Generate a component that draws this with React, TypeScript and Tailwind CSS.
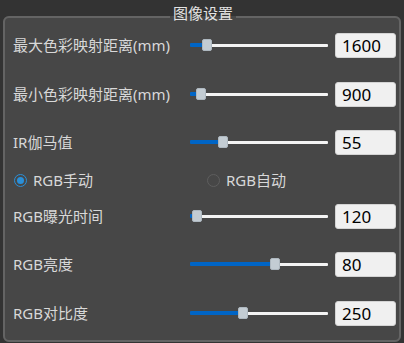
import React from "react";

type Row = { label: string; value: string; fill: number };

const TOP: Row[] = [
  { label: "最大色彩映射距离(mm)", value: "1600", fill: 12 },
  { label: "最小色彩映射距离(mm)", value: "900", fill: 6 },
  { label: "IR伽马值", value: "55", fill: 28 },
];

const BOTTOM: Row[] = [
  { label: "RGB曝光时间", value: "120", fill: 2 },
  { label: "RGB亮度", value: "80", fill: 80 },
  { label: "RGB对比度", value: "250", fill: 48 },
];

const font = { fontFamily: '"Noto Sans", "Noto Sans CJK SC", sans-serif' };

function Slider({ fill }: { fill: number }) {
  // track is 138px, handle 10px
  return (
    <div className="w-[138px] h-[12px] flex items-center shrink-0">
      <div className="h-[4px] bg-[#0065c6] rounded-l-[1px]" style={{ width: fill }} />
      <div className="w-[10px] h-[12px] rounded-[2px] bg-[#c3ccd3] border border-[#aeb8c0] shrink-0" />
      <div className="flex-1 h-[3px] bg-[#f4f4f4] rounded-r-[1px]" />
    </div>
  );
}

function SliderRow({ row, className }: { row: Row; className?: string }) {
  return (
    <div className={["flex items-center h-[24px] pl-[8px]", className || ""].join(" ")}>
      <div className="w-[177px] shrink-0 text-[15px] leading-[20px] text-[#d8d8d8] whitespace-nowrap">{row.label}</div>
      <Slider fill={row.fill} />
      <div className="ml-[7px] w-[61px] h-[25px] shrink-0 rounded-[3px] bg-[#f0f0f0] border border-[#d4d4d4] pl-[6px] flex items-center text-[17px] leading-none text-black">
        {row.value}
      </div>
    </div>
  );
}

function Radio({ checked, label }: { checked: boolean; label: string }) {
  return (
    <div className="flex items-center">
      <div className={["w-[13px] h-[13px] rounded-full border grid place-items-center shrink-0", checked ? "border-[#2a8fd8]" : "border-[#5e5e5e]"].join(" ")}>
        {checked && <div className="w-[7px] h-[7px] rounded-full bg-[#2a8fd8]" />}
      </div>
      <span className="ml-[6px] text-[15px] leading-[20px] text-[#d8d8d8] whitespace-nowrap">{label}</span>
    </div>
  );
}

export default function App() {
  return (
    <div className="w-[404px] h-[343px] bg-[#333333] px-[3px] overflow-hidden" style={font}>
      <fieldset className="border-2 border-[#646464] rounded-[6px] bg-[#474747] pb-[15px]">
        <legend className="ml-[165px] px-[3px] pt-[3px] pb-[10px] text-[15px] leading-[20px] text-[#e2e2e2]">图像设置</legend>
        <SliderRow row={TOP[0]} />
        <SliderRow row={TOP[1]} className="mt-[25px]" />
        <SliderRow row={TOP[2]} className="mt-[24px]" />
        <div className="mt-[14px] h-[24px] flex items-center pl-[9px]">
          <div className="w-[193px]">
            <Radio checked label="RGB手动" />
          </div>
          <Radio checked={false} label="RGB自动" />
        </div>
        <SliderRow row={BOTTOM[0]} className="mt-[12px]" />
        <SliderRow row={BOTTOM[1]} className="mt-[24px]" />
        <SliderRow row={BOTTOM[2]} className="mt-[25px]" />
      </fieldset>
    </div>
  );
}
